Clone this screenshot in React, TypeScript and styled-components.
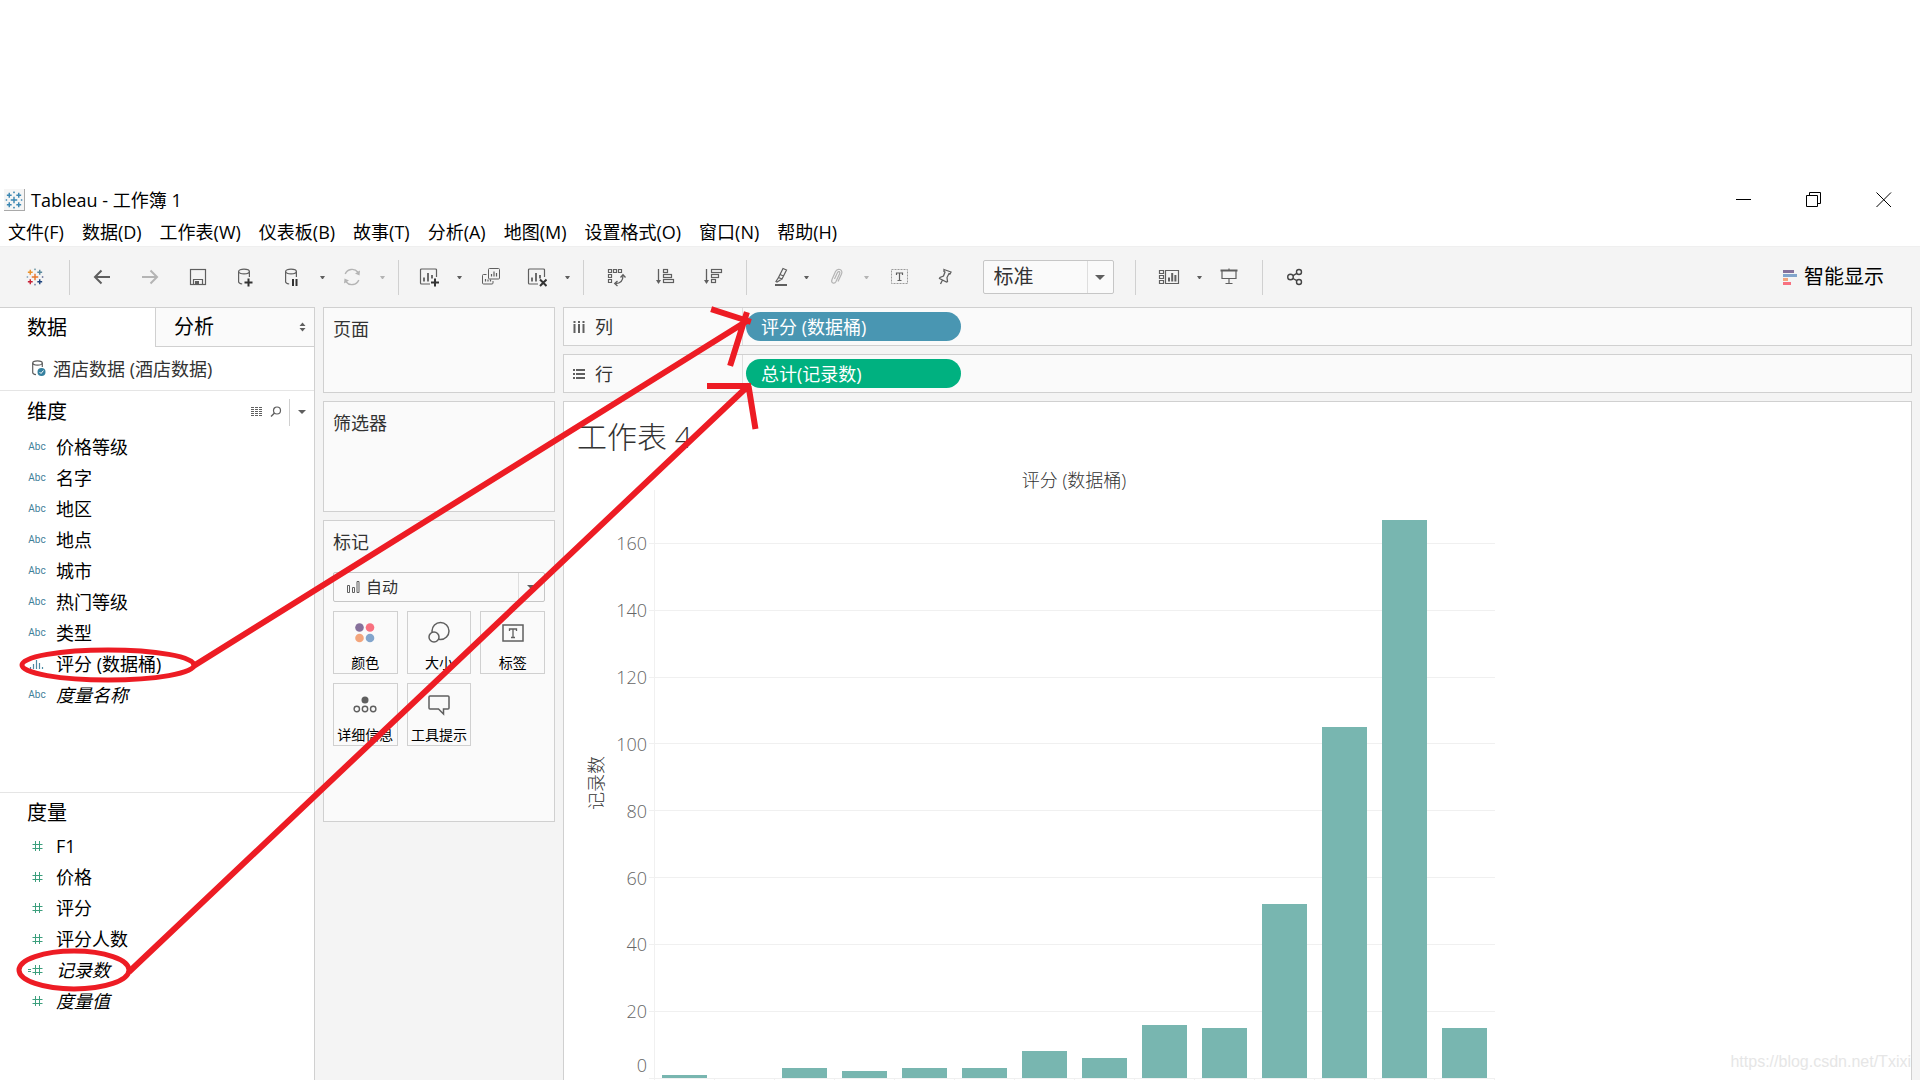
import React from "react";
import styled, { createGlobalStyle, css } from "styled-components";

const GlobalStyle = createGlobalStyle`
  *, *::before, *::after { box-sizing: border-box; }
  body {
    margin: 0;
    background: #fff;
    color: #000;
    font-family: "Open Sans", "Noto Sans CJK SC", sans-serif;
    font-size: 18px;
    line-height: 24px;
  }
  button, select { font: inherit; color: inherit; }
  ul { list-style: none; margin: 0; padding: 0; }
  h1, h2, h3 { margin: 0; font-weight: 400; }
`;

const line = "#d0d0d0";
const softLine = "#e5e5e5";
const panel = "#fafafa";
const chrome = "#f4f4f4";
const ink = "#5f5f5f";
const faded = "#b4b4b4";

const Page = styled.div`
  position: relative;
  display: flex;
  flex-direction: column;
  min-height: 100vh;
  padding-top: 180px;
  overflow: hidden;
`;

const TitleBar = styled.header`
  display: flex;
  align-items: center;
  gap: 6px;
  height: 38px;
  padding: 2px 1px 0 4px;
`;

const WindowTitle = styled.h1`
  flex: 1;
  font-size: 18px;
`;

const WindowControls = styled.div`
  display: flex;
`;

const PlainButton = styled.button`
  display: flex;
  align-items: center;
  justify-content: center;
  padding: 0;
  border: 0;
  background: none;
`;

const WindowButton = styled(PlainButton)`
  width: 70px;
  height: 36px;
`;

const MenuBar = styled.nav`
  display: flex;
  gap: 18px;
  height: 28px;
  padding-left: 8px;
`;

const MenuItem = styled(PlainButton)`
  white-space: nowrap;
`;

const Toolbar = styled.div`
  display: flex;
  align-items: center;
  height: 61px;
  padding-right: 36px;
  border-top: 1px solid #efefef;
  background: ${chrome};
`;

const ToolGroup = styled.div<{ $w: number }>`
  display: flex;
  align-items: center;
  justify-content: center;
  width: ${(p) => p.$w}px;
  height: 35px;
  border-right: 1px solid ${line};
`;

const Tool = styled(PlainButton)<{ $w?: number }>`
  width: ${(p) => p.$w ?? 48}px;
  height: 35px;
`;

const Push = styled.div`
  flex: 1;
`;

const ShowMe = styled(PlainButton)`
  gap: 7px;
  font-size: 20px;
`;

const SelectBox = styled.div<{ $h: number; $arrow: number }>`
  display: grid;
  grid-template-columns: 1fr ${(p) => p.$arrow}px;
  align-items: stretch;
  height: ${(p) => p.$h}px;
  border: 1px solid #c6c6c6;
  border-radius: 2px;
  background: ${panel};
`;

const ZoomBox = styled(SelectBox)`
  width: 131px;
  margin: 0 8px 0 18px;
  font-size: 20px;
`;

const Select = styled.select<{ $pad: number }>`
  grid-column: 1 / 3;
  grid-row: 1;
  width: 100%;
  padding: 0 0 0 ${(p) => p.$pad}px;
  border: 0;
  background: none;
  color: #333;
  appearance: none;
`;

const SelectArrow = styled.span`
  grid-column: 2;
  grid-row: 1;
  display: flex;
  align-items: center;
  justify-content: center;
  border-left: 1px solid #dedede;
  pointer-events: none;
`;

const SelectIcon = styled.span`
  grid-column: 1;
  grid-row: 1;
  display: flex;
  align-items: center;
  padding-left: 12px;
  pointer-events: none;
`;

const Workspace = styled.div`
  display: flex;
  flex: 1;
  gap: 8px;
  padding-right: 8px;
  background: ${chrome};
`;

const DataPane = styled.aside`
  display: flex;
  flex-direction: column;
  flex: none;
  width: 315px;
  border-top: 1px solid ${line};
  border-right: 1px solid ${line};
  background: #fff;
`;

const Tabs = styled.div`
  display: flex;
`;

const Tab = styled(PlainButton)<{ $active?: boolean }>`
  justify-content: space-between;
  height: 39px;
  font-size: 20px;
  ${(p) =>
    p.$active
      ? css`
          width: 155px;
          padding-left: 27px;
        `
      : css`
          flex: 1;
          padding: 0 8px 0 18px;
          border-left: 1px solid ${line};
          border-bottom: 1px solid ${line};
          background: ${panel};
        `}
`;

const Source = styled.div`
  display: flex;
  align-items: center;
  gap: 7px;
  height: 44px;
  padding-left: 32px;
  border-bottom: 1px solid ${softLine};
  color: #333;
`;

const Section = styled.section<{ $fill?: boolean }>`
  ${(p) =>
    p.$fill
      ? css`
          flex: 1;
        `
      : css`
          height: 402px;
          border-bottom: 1px solid ${softLine};
        `}
`;

const SectionHead = styled.div<{ $h: number }>`
  display: flex;
  align-items: center;
  height: ${(p) => p.$h}px;
  padding: 2px 0 0 27px;
`;

const SectionTitle = styled.h2`
  flex: 1;
  font-size: 20px;
`;

const HeadButton = styled(PlainButton)<{ $w: number; $ruled?: boolean }>`
  width: ${(p) => p.$w}px;
  height: 27px;
  border-left: ${(p) => (p.$ruled ? `1px solid ${line}` : "0")};
`;

const Field = styled.li<{ $italic?: boolean }>`
  display: flex;
  align-items: center;
  height: 31px;
  font-style: ${(p) => (p.$italic ? "italic" : "normal")};
`;

const TypeCell = styled.span`
  display: flex;
  align-items: center;
  justify-content: center;
  width: 56px;
  padding-left: 18px;
  flex: none;
  color: #3f8099;
  font-family: Roboto, sans-serif;
  font-size: 10px;
  font-style: normal;
`;

const CardColumn = styled.div`
  display: flex;
  flex-direction: column;
  gap: 8px;
  flex: none;
  width: 232px;
`;

const Card = styled.section<{ $h: number }>`
  height: ${(p) => p.$h}px;
  padding: 9px;
  border: 1px solid ${line};
  background: ${panel};
`;

const CardTitle = styled.h2`
  font-size: 18px;
  color: #333;
`;

const MarkSelect = styled(SelectBox)`
  margin: 18px 0 9px;
  font-size: 16px;
`;

const MarkGrid = styled.div`
  display: grid;
  grid-template-columns: repeat(3, 1fr);
  grid-auto-rows: 63px;
  gap: 9px;
`;

const Mark = styled(PlainButton)`
  flex-direction: column;
  justify-content: space-between;
  padding-top: 9px;
  border: 1px solid ${line};
  background: ${panel};
  font-size: 14px;
  line-height: 20px;
  white-space: nowrap;
`;

const Canvas = styled.main`
  display: flex;
  flex-direction: column;
  gap: 8px;
  flex: 1;
  min-width: 0;
`;

const Shelf = styled.section`
  display: flex;
  align-items: stretch;
  height: 39px;
  border: 1px solid ${line};
  background: ${panel};
`;

const ShelfName = styled.h2`
  display: flex;
  align-items: center;
  gap: 10px;
  width: 179px;
  padding-left: 9px;
  border-right: 1px solid #dedede;
  font-size: 18px;
  color: #333;
`;

const Pill = styled.button<{ $color: string }>`
  align-self: center;
  width: 215px;
  height: 29px;
  margin-left: 3px;
  padding: 0 15px;
  border: 0;
  border-radius: 15px;
  background: ${(p) => p.$color};
  color: #fff;
  line-height: 24px;
  text-align: left;
`;

const Sheet = styled.section`
  position: relative;
  flex: 1;
  border: 1px solid ${line};
  border-bottom: 0;
  background: #fff;
  overflow: hidden;
`;

const SheetTitle = styled.h2`
  padding: 12px 13px 0;
  font-size: 30px;
  font-weight: 300;
  line-height: 46px;
  color: #333;
`;

const Chart = styled.svg`
  display: block;
  font-size: 18px;
`;

const AxisLabel = styled.text`
  fill: #666;
  font-weight: 300;
  text-anchor: end;
`;

const ChartCaption = styled.text`
  fill: #333;
  font-weight: 300;
  text-anchor: middle;
`;

const Watermark = styled.span`
  position: absolute;
  right: 0;
  bottom: 6px;
  color: #e6e6e6;
  font-family: "Liberation Sans", sans-serif;
  font-size: 16px;
`;

const Annotations = styled.svg`
  position: absolute;
  left: 0;
  top: 0;
  pointer-events: none;
`;

type IconProps = { w?: number; h?: number; color?: string; children: React.ReactNode };

const Icon = ({ w = 20, h = 20, color = ink, children }: IconProps) => (
  <svg width={w} height={h} viewBox={`0 0 ${w} ${h}`} fill="none" stroke={color} aria-hidden="true">
    {children}
  </svg>
);

const Caret = ({ size = 5, color = ink }: { size?: number; color?: string }) => (
  <svg width={size * 2} height={size} viewBox="0 0 10 5" aria-hidden="true">
    <path d="M0 0h10L5 5z" fill={color} />
  </svg>
);

const SmallCaret = ({ color }: { color?: string }) => (
  <svg width="5" height="3" viewBox="0 0 5 3" aria-hidden="true">
    <path d="M0 0h5L3 3H2z" fill={color ?? ink} />
  </svg>
);

const plus = (x: number, y: number, r: number) => `M${x - r} ${y}h${2 * r}M${x} ${y - r}v${2 * r}`;

const logoParts: [number, number, number, string][] = [
  [9, 9, 4, "#e8762c"],
  [4, 4, 3, "#eb912b"],
  [14, 4, 3, "#59879b"],
  [4, 14, 3, "#c72035"],
  [14, 14, 3, "#1f457e"],
  [9, 1, 1, "#7199a6"],
  [9, 17, 1, "#7b86a8"],
  [1, 9, 1, "#7b9bb5"],
  [17, 9, 1, "#5b6591"],
];

const Logo = ({ mono }: { mono?: string }) => (
  <svg width="18" height="18" viewBox="-0.5 -0.5 19 19" fill="none" aria-hidden="true">
    {logoParts.map(([x, y, r, c]) => (
      <path key={`${x}-${y}`} d={plus(x, y, r * 0.85)} stroke={mono ?? c} strokeWidth={r === 1 ? 1.2 : 1.5} />
    ))}
  </svg>
);

const LogoTile = styled.span`
  display: flex;
  align-items: center;
  justify-content: center;
  width: 21px;
  height: 22px;
  border-right: 1px solid #a9a9a9;
  border-bottom: 1px solid #a9a9a9;
  background: #f5f5f5;
`;

const Cylinder = ({ color }: { color?: string }) => (
  <g stroke={color} strokeWidth="1.2">
    <ellipse cx="7" cy="4.5" rx="5.4" ry="2.4" />
    <path d="M1.6 4.5v10.2c0 1.2 1.6 2 3.6 2.3M12.4 4.5v5.5" />
  </g>
);

const SheetFrame = () => (
  <>
    <path d="M17.500 10V3a1 1 0 0 0-1-1h-14a1 1 0 0 0-1 1v13a1 1 0 0 0 1 1h8.500" strokeWidth="1.200" />
    <path d="M5 14.500v-4M9 14.500V6M13 11.500V8" strokeWidth="1.800" />
  </>
);

const NewSheetIcon = () => (
  <Icon>
    <SheetFrame />
    <path d="M12 15.500h8M16 11.500v8" stroke="#333" strokeWidth="2" />
  </Icon>
);

const ClearSheetIcon = () => (
  <Icon>
    <SheetFrame />
    <path d="M13 12.500l6.500 6.500M19.500 12.500l-6.500 6.500" stroke="#333" strokeWidth="2" />
  </Icon>
);

const DuplicateIcon = () => (
  <Icon>
    <path d="M8.500 1.500h9a1 1 0 0 1 1 1v8.500a1 1 0 0 1-1 1h-9a1 1 0 0 1-1-1V2.500a1 1 0 0 1 1-1z" />
    <path d="M5.500 7.500h-3a1 1 0 0 0-1 1v7.500a1 1 0 0 0 1 1h8.500a1 1 0 0 0 1-1v-2" />
    <path d="M10.500 9.500V7M13 9.500V4.500M15.500 9.500V6M4.500 14.500v-2.500M7 14.500v-2M9.500 14.500v-2" strokeWidth="1.200" />
  </Icon>
);

const SwapIcon = () => (
  <Icon>
    <path d="M1.500 2.500h3v3h-3zM6.500 2.500h3v3h-3zM11.500 2.500h3v3h-3zM1.500 7.500h3v3h-3zM1.500 12.500h3v3h-3z" strokeWidth="1.200" />
    <path d="M16 8.500c0 5-2.500 8-7.500 8" strokeWidth="1.300" />
    <path d="M13.500 10.500l2.500-2.800 2.500 2.800M10.500 14l-2.800 2.500 2.800 2.500" strokeWidth="1.300" />
  </Icon>
);

const SortIcon = ({ rows }: { rows: number[] }) => (
  <Icon>
    <path d="M3.500 2v13.500" strokeWidth="1.300" />
    <path d="M1 13h5l-2.500 4z" fill={ink} stroke="none" />
    {rows.map((w, i) => (
      <rect key={i} x="8.500" y={2.500 + i * 5} width={w} height="3" strokeWidth="1.200" />
    ))}
  </Icon>
);

const axisMax = 176;
const unit = 3.341;
const baseline = 618;
const yOf = (v: number) => baseline - v * unit;
const ticks = [0, 20, 40, 60, 80, 100, 120, 140, 160];
const counts = [1, 0, 3, 2, 3, 3, 8, 6, 16, 15, 52, 105, 167, 15];
const plotLeft = 90;
const step = 60;
const plotRight = plotLeft + counts.length * step;

const Histogram = () => (
  <Chart width="932" height="620" viewBox="0 0 932 620" role="img" aria-label="记录数 / 评分 (数据桶)">
    <ChartCaption x={plotLeft + (counts.length * step) / 2} y="27">
      评分 (数据桶)
    </ChartCaption>
    <ChartCaption transform="translate(39 323) rotate(-90)">记录数</ChartCaption>
    <g stroke="#f0f0f0" strokeWidth="1" shapeRendering="crispEdges">
      {ticks.map((t) => (
        <path key={t} d={`M${plotLeft - 5} ${yOf(t)}H${plotRight + 1}`} />
      ))}
      <path d={`M${plotLeft + 0.5} ${yOf(axisMax)}V620`} />
      {counts.map((_, i) => (
        <path key={i} d={`M${plotLeft + (i + 1) * step + 0.5} ${baseline}v3`} />
      ))}
    </g>
    {ticks.map((t) => (
      <AxisLabel key={t} x="83" y={t === 0 ? yOf(0) - 6 : yOf(t) + 7}>
        {t}
      </AxisLabel>
    ))}
    <g fill="#78b6b0" shapeRendering="crispEdges">
      {counts.map((v, i) => (
        <rect key={i} x={plotLeft + 8 + i * step} y={yOf(v)} width="45" height={v * unit} />
      ))}
    </g>
  </Chart>
);

const menus = ["文件(F)", "数据(D)", "工作表(W)", "仪表板(B)", "故事(T)", "分析(A)", "地图(M)", "设置格式(O)", "窗口(N)", "帮助(H)"];

const dimensions = [
  { name: "价格等级" },
  { name: "名字" },
  { name: "地区" },
  { name: "地点" },
  { name: "城市" },
  { name: "热门等级" },
  { name: "类型" },
  { name: "评分 (数据桶)", bin: true },
  { name: "度量名称", italic: true },
];

const measures = [
  { name: "F1" },
  { name: "价格" },
  { name: "评分" },
  { name: "评分人数" },
  { name: "记录数", italic: true, calc: true },
  { name: "度量值", italic: true },
];

const marks = [
  {
    label: "颜色",
    icon: (
      <Icon w={24} h={24}>
        <g stroke="none">
          <circle cx="6.500" cy="6.500" r="4.300" fill="#86719b" />
          <circle cx="17" cy="6.500" r="4.300" fill="#f8707f" />
          <circle cx="6.500" cy="17" r="4.300" fill="#f3a57c" />
          <circle cx="17" cy="17" r="4.300" fill="#82a5cc" />
        </g>
      </Icon>
    ),
  },
  {
    label: "大小",
    icon: (
      <Icon w={24} h={24}>
        <circle cx="13.500" cy="10" r="8.500" strokeWidth="1.500" />
        <circle cx="7" cy="16" r="5" fill={panel} strokeWidth="1.500" />
      </Icon>
    ),
  },
  {
    label: "标签",
    icon: (
      <Icon w={24} h={24}>
        <rect x="2" y="4" width="20" height="16" strokeWidth="1.500" />
        <path d="M8.500 10V8h7v2M12 8v8.500M10 16.500h4" strokeWidth="1.300" />
      </Icon>
    ),
  },
  {
    label: "详细信息",
    icon: (
      <Icon w={24} h={24}>
        <circle cx="12" cy="7" r="3.500" fill={ink} stroke="none" />
        <circle cx="3.800" cy="16" r="2.700" strokeWidth="1.400" />
        <circle cx="12" cy="16" r="2.700" strokeWidth="1.400" />
        <circle cx="20.200" cy="16" r="2.700" strokeWidth="1.400" />
      </Icon>
    ),
  },
  {
    label: "工具提示",
    icon: (
      <Icon w={24} h={24}>
        <path d="M3 3h18a1 1 0 0 1 1 1v11a1 1 0 0 1-1 1h-4.500v5l-5-5H3a1 1 0 0 1-1-1V4a1 1 0 0 1 1-1z" strokeWidth="1.500" />
      </Icon>
    ),
  },
];

const HashIcon = ({ calc }: { calc?: boolean }) => (
  <Icon w={20} h={12} color="#3c9f7d">
    <path d="M8.500 1v10M12.500 1v10M5.500 4.500h10M5.500 8.500h10" />
    {calc && <path d="M1 5.500h3M1 7.500h3" />}
  </Icon>
);

const BinIcon = () => (
  <Icon w={16} h={12} color="#4f8ba3">
    <path d="M1.500 9v2M4.500 6v5M7.500 2v9M10.500 5v6M13.500 9v2" strokeWidth="1.200" />
  </Icon>
);

export default function App() {
  return (
    <>
      <GlobalStyle />
      <Page>
        <TitleBar>
          <LogoTile>
            <Logo mono="#3b87b3" />
          </LogoTile>
          <WindowTitle>Tableau - 工作簿 1</WindowTitle>
          <WindowControls>
            <WindowButton aria-label="最小化">
              <Icon w={16} h={16} color="#000">
                <path d="M0 7.500h15" />
              </Icon>
            </WindowButton>
            <WindowButton aria-label="还原">
              <Icon w={16} h={16} color="#000">
                <path d="M0.500 3.500h11v11h-11zM3.500 3.500v-3h11v11h-3" />
              </Icon>
            </WindowButton>
            <WindowButton aria-label="关闭">
              <Icon w={16} h={16} color="#000">
                <path d="M0.500 0.500l14.500 14.500M15 0.500l-14.500 14.500" />
              </Icon>
            </WindowButton>
          </WindowControls>
        </TitleBar>

        <MenuBar>
          {menus.map((m) => (
            <MenuItem key={m}>{m}</MenuItem>
          ))}
        </MenuBar>

        <Toolbar>
          <ToolGroup $w={70}>
            <Tool aria-label="开始">
              <Logo />
            </Tool>
          </ToolGroup>
          <ToolGroup $w={329}>
            <Tool aria-label="撤消">
              <Icon>
                <path d="M2.500 10H18M9.500 3.500l-6.500 6.500 6.500 6.500" strokeWidth="2" />
              </Icon>
            </Tool>
            <Tool aria-label="重做">
              <Icon color={faded}>
                <path d="M2 10h15.500M10.500 3.500l6.500 6.500-6.500 6.500" strokeWidth="2" />
              </Icon>
            </Tool>
            <Tool aria-label="保存">
              <Icon>
                <rect x="2.500" y="2.500" width="15" height="15" strokeWidth="1.200" />
                <path d="M5.500 17.500v-5h9v5" strokeWidth="1.200" />
                <path d="M7 14h4v3.500H7z" fill={ink} stroke="none" />
              </Icon>
            </Tool>
            <Tool aria-label="新建数据源">
              <Icon>
                <g transform="translate(1 0)">
                  <Cylinder />
                  <path d="M7.500 15.500h8M11.500 11.500v8" stroke="#333" strokeWidth="2" />
                </g>
              </Icon>
            </Tool>
            <Tool $w={44} aria-label="暂停自动更新">
              <Icon>
                <g transform="translate(2 0)">
                  <Cylinder />
                  <path d="M9 12v7M12.500 12v7" stroke="#333" strokeWidth="2" />
                </g>
              </Icon>
            </Tool>
            <Tool $w={16} aria-label="更新选项">
              <SmallCaret />
            </Tool>
            <Tool $w={44} aria-label="运行更新">
              <Icon color={faded}>
                <path d="M3.200 7A7.500 7.500 0 0 1 16 5.200M16.800 13A7.500 7.500 0 0 1 4 14.800" strokeWidth="1.400" />
                <path d="M18 3.500l-0.500 5-4.500-2zM2 16.500l0.500-5 4.500 2z" fill={faded} stroke="none" />
              </Icon>
            </Tool>
            <Tool $w={16} aria-label="运行选项">
              <SmallCaret color={faded} />
            </Tool>
          </ToolGroup>
          <ToolGroup $w={185}>
            <Tool $w={44} aria-label="新建工作表">
              <NewSheetIcon />
            </Tool>
            <Tool $w={16} aria-label="新建选项">
              <SmallCaret />
            </Tool>
            <Tool aria-label="复制工作表">
              <DuplicateIcon />
            </Tool>
            <Tool $w={44} aria-label="清除工作表">
              <ClearSheetIcon />
            </Tool>
            <Tool $w={16} aria-label="清除选项">
              <SmallCaret />
            </Tool>
          </ToolGroup>
          <ToolGroup $w={163}>
            <Tool aria-label="交换行和列">
              <SwapIcon />
            </Tool>
            <Tool aria-label="升序排序">
              <SortIcon rows={[4, 8, 10]} />
            </Tool>
            <Tool aria-label="降序排序">
              <SortIcon rows={[10, 7, 4]} />
            </Tool>
          </ToolGroup>
          <ToolGroup $w={389}>
            <Tool $w={40} aria-label="突出显示">
              <Icon>
                <path d="M12 1.500l3.500 1.500-4.500 9-3.500-1.500zM7.500 10.500l-2.500 4 1 0.500 5-3M9 7.500l3.500 1.500" strokeWidth="1.200" />
                <path d="M4 18h12" strokeWidth="2" />
              </Icon>
            </Tool>
            <Tool $w={12} aria-label="突出显示选项">
              <SmallCaret />
            </Tool>
            <Tool $w={48} aria-label="组成员">
              <Icon color={faded}>
                <path
                  d="M7.500 12l3-6.500c1-1.800 3-0.800 2.200 1L9 14.500c-1.500 3-5.500 1.500-4-2L8.500 4.500c2-4 8-2 6 2.500L11 14.500"
                  strokeWidth="1.200"
                />
              </Icon>
            </Tool>
            <Tool $w={12} aria-label="组选项">
              <SmallCaret color={faded} />
            </Tool>
            <Tool $w={52} aria-label="显示标记标签">
              <Icon>
                <rect x="2.500" y="2.500" width="16" height="14" stroke="#9a9a9a" strokeDasharray="2 1" />
                <path d="M7.500 8V6h6v2M10.500 6v7.500M8.500 13.500h4" strokeWidth="1.200" />
              </Icon>
            </Tool>
            <Tool $w={40} aria-label="固定轴">
              <Icon>
                <path d="M9 2.500l7 2.500-1 2-1-0.500-2 4 0.500 4-1 0.500-7-3.500 0.500-1 3.500-1.500 1.500-4-1-0.500zM7.500 13l-2 4" strokeWidth="1.300" />
              </Icon>
            </Tool>
            <ZoomBox $h={34} $arrow={26}>
              <Select $pad={10} aria-label="适合" defaultValue="标准">
                <option>标准</option>
              </Select>
              <SelectArrow>
                <Caret />
              </SelectArrow>
            </ZoomBox>
          </ToolGroup>
          <ToolGroup $w={127}>
            <Tool $w={48} aria-label="显示/隐藏卡">
              <Icon w={22}>
                <path d="M1.500 3.500h4v3h-4zM1.500 8.500h4v3h-4zM1.500 13.500h4v3h-4zM7.500 3.500h13v13h-13z" strokeWidth="1.200" />
                <path d="M11 14.500v-4M14.200 14.500V6M17.400 14.500V8" strokeWidth="2" />
              </Icon>
            </Tool>
            <Tool $w={12} aria-label="卡选项">
              <SmallCaret />
            </Tool>
            <Tool $w={48} aria-label="演示模式">
              <Icon>
                <path d="M1.500 3.500h17" strokeWidth="2" />
                <path d="M3 4v7.500h14V4M10 11.500V16M6.500 16.500h7M10 1.500v2" strokeWidth="1.200" />
              </Icon>
            </Tool>
          </ToolGroup>
          <Tool $w={64} aria-label="共享工作簿">
            <Icon color="#444">
              <circle cx="5.500" cy="10" r="2.800" strokeWidth="1.400" />
              <circle cx="14" cy="5" r="2.500" strokeWidth="1.400" />
              <circle cx="14" cy="15" r="2.500" strokeWidth="1.400" />
              <path d="M8 8.600l3.800-2.200M8 11.500l3.800 2.100" strokeWidth="1.400" />
            </Icon>
          </Tool>
          <Push />
          <ShowMe>
            <Icon w={14} h={15}>
              <g stroke="none">
                <path d="M0 0h11v3H0z" fill="#86719b" />
                <path d="M0 4h14v3H0z" fill="#82a5cc" />
                <path d="M0 8h5v3H0z" fill="#f3a57c" />
                <path d="M0 12h8v3H0z" fill="#f8707f" />
              </g>
            </Icon>
            智能显示
          </ShowMe>
        </Toolbar>

        <Workspace>
          <DataPane>
            <Tabs>
              <Tab $active>数据</Tab>
              <Tab>
                分析
                <Icon w={7} h={10}>
                  <path d="M3.500 0.500l3 3.500h-6zM3.500 9.500l3-3.500h-6z" fill={ink} stroke="none" />
                </Icon>
              </Tab>
            </Tabs>
            <Source>
              <Icon w={14} h={17}>
                <ellipse cx="5.500" cy="3" rx="4.800" ry="2.200" strokeWidth="1.200" />
                <path d="M0.700 3v9.500c0 1.200 1.300 1.900 3.300 2.200M10.300 3v4" strokeWidth="1.200" />
                <circle cx="9.500" cy="12" r="4" fill="#35809f" stroke="none" />
                <path d="M7.500 12l1.500 1.500 2.500-3" stroke="#fff" />
              </Icon>
              酒店数据 (酒店数据)
            </Source>
            <Section>
              <SectionHead $h={40}>
                <SectionTitle>维度</SectionTitle>
                <HeadButton $w={12} aria-label="查看数据">
                  <Icon w={12} h={10}>
                    <path d="M0 0.500h12M0 2.500h12M0 4.500h12M0 6.500h12M0 8.500h12" strokeDasharray="3 1" strokeWidth="1" />
                  </Icon>
                </HeadButton>
                <HeadButton $w={26} aria-label="查找字段">
                  <Icon w={12} h={12}>
                    <circle cx="7" cy="4.500" r="3.500" strokeWidth="1.200" />
                    <path d="M4.500 7L1 10.500" strokeWidth="1.500" />
                  </Icon>
                </HeadButton>
                <HeadButton $w={25} $ruled aria-label="维度选项">
                  <Caret size={4} />
                </HeadButton>
              </SectionHead>
              <ul>
                {dimensions.map((d) => (
                  <Field key={d.name} $italic={d.italic}>
                    <TypeCell>{d.bin ? <BinIcon /> : "Abc"}</TypeCell>
                    {d.name}
                  </Field>
                ))}
              </ul>
            </Section>
            <Section $fill>
              <SectionHead $h={37}>
                <SectionTitle>度量</SectionTitle>
              </SectionHead>
              <ul>
                {measures.map((m) => (
                  <Field key={m.name} $italic={m.italic}>
                    <TypeCell>
                      <HashIcon calc={m.calc} />
                    </TypeCell>
                    {m.name}
                  </Field>
                ))}
              </ul>
            </Section>
          </DataPane>

          <CardColumn>
            <Card $h={86}>
              <CardTitle>页面</CardTitle>
            </Card>
            <Card $h={111}>
              <CardTitle>筛选器</CardTitle>
            </Card>
            <Card $h={302}>
              <CardTitle>标记</CardTitle>
              <MarkSelect $h={30} $arrow={26}>
                <SelectIcon>
                  <Icon w={14} h={14}>
                    <path d="M1.500 5.500h2v7h-2zM6.500 7.500h2v5h-2zM11 1.500h2v11h-2z" />
                  </Icon>
                </SelectIcon>
                <Select $pad={32} aria-label="标记类型" defaultValue="自动">
                  <option>自动</option>
                </Select>
                <SelectArrow>
                  <Caret />
                </SelectArrow>
              </MarkSelect>
              <MarkGrid>
                {marks.map((m) => (
                  <Mark key={m.label}>
                    {m.icon}
                    {m.label}
                  </Mark>
                ))}
              </MarkGrid>
            </Card>
          </CardColumn>

          <Canvas>
            <Shelf>
              <ShelfName>
                <Icon w={12} h={12}>
                  <path d="M1.500 0v2M6 0v2M10.500 0v2M1.500 3v9M6 3v9M10.500 3v9" strokeWidth="2" />
                </Icon>
                列
              </ShelfName>
              <Pill $color="#4996b2">评分 (数据桶)</Pill>
            </Shelf>
            <Shelf>
              <ShelfName>
                <Icon w={12} h={12}>
                  <path d="M0 2h2M0 6h2M0 10h2M3 2h9M3 6h9M3 10h9" strokeWidth="2" />
                </Icon>
                行
              </ShelfName>
              <Pill $color="#00b180">总计(记录数)</Pill>
            </Shelf>
            <Sheet>
              <SheetTitle>工作表 4</SheetTitle>
              <Histogram />
              <Watermark>https://blog.csdn.net/Txixi</Watermark>
            </Sheet>
          </Canvas>
        </Workspace>

        <Annotations width="800" height="1080" viewBox="0 0 800 1080" fill="none" stroke="#ed1c24" strokeWidth="5" aria-hidden="true">
          <ellipse cx="108" cy="665" rx="86" ry="15" />
          <ellipse cx="74" cy="970" rx="55" ry="19" />
          <path
            d="M195 665L747 321M714 310l34 11M746 315l-15 48M131 970L747 387M710 386h38M749 389l6 37"
            strokeWidth="6"
            strokeLinecap="square"
          />
        </Annotations>
      </Page>
    </>
  );
}
